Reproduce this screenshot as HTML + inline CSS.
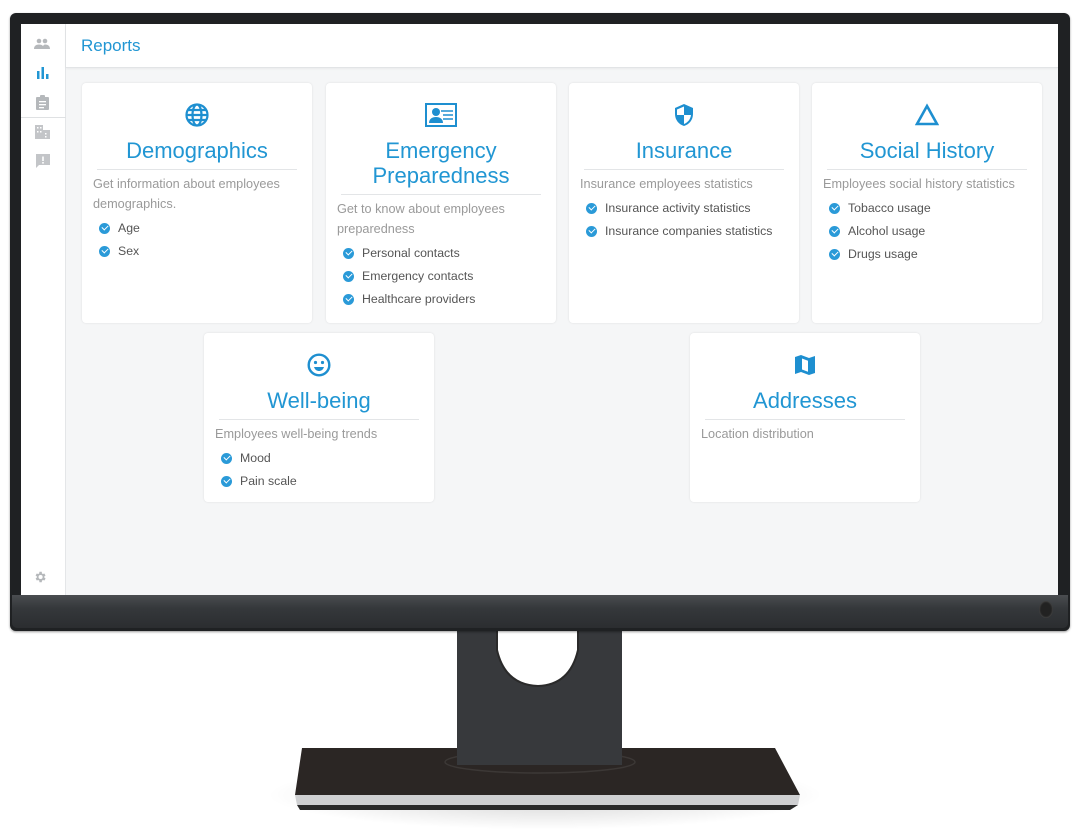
<!DOCTYPE html>
<html><head><meta charset="utf-8"><style>
*{margin:0;padding:0;box-sizing:border-box}
body{width:1082px;height:833px;background:#fff;position:relative;overflow:hidden;font-family:"Liberation Sans",sans-serif}
.abs{position:absolute}
.frame{left:10px;top:13px;width:1060px;height:618px;background:#1f2123;border-radius:6px;box-shadow:0 1px 2px rgba(0,0,0,.4)}
.bezel{left:12px;top:595px;width:1056px;height:33px;background:linear-gradient(#4a4d50,#35383b 40%,#2b2d30);border-radius:0 0 5px 5px}
.screen{left:21px;top:24px;width:1037px;height:571px;background:#f5f6f7;overflow:hidden}
.side{left:0;top:0;width:45px;height:571px;background:#fff;border-right:1px solid #e4e6e8}
.head{left:45px;top:0;width:992px;height:44px;background:#fff;border-bottom:1px solid #e2e4e6;box-shadow:0 1px 2px rgba(0,0,0,.05)}
.head span{position:absolute;left:15px;top:12px;font-size:17px;color:#2196d3}
.card{position:absolute;width:230px;background:#fff;border-radius:4px;box-shadow:0 0 2px rgba(0,0,0,.1);padding:20px 11px 0 11px;text-align:center}
.card svg.ic{display:block;margin:0 auto 11px;width:24px;height:24px}
.t{font-size:22px;line-height:25px;color:#2196d3;margin:0 4px;padding-bottom:6px;border-bottom:1px solid #e3e5e7}
.d{font-size:12.7px;line-height:20px;color:#9a9a9a;text-align:left;margin-top:4px}
ul{list-style:none;text-align:left;margin-top:3px;padding-left:6px}
li{font-size:12.3px;line-height:23px;color:#555;position:relative;padding-left:19px}
li:before{content:"";position:absolute;left:0;top:6px;width:11px;height:11px;border-radius:50%;background:#2a9ad8}
li:after{content:"";position:absolute;left:3px;top:8px;width:5px;height:3px;border-left:1.6px solid #fff;border-bottom:1.6px solid #fff;transform:rotate(-45deg)}
</style></head><body>
<div class="abs" style="left:265px;top:760px;width:560px;height:70px;border-radius:50%;background:radial-gradient(ellipse at center,rgba(0,0,0,.18),rgba(0,0,0,0) 70%)"></div>
<svg class="abs" style="left:0;top:0" width="1082" height="833">
<polygon points="302,748 775,748 800,795 295,795" fill="#2b2624"/>
<polygon points="295,795 800,795 798,805 297,805" fill="#cfd0d2"/>
<polygon points="297,805 798,805 790,810 300,810" fill="#2a2a2a"/>
<ellipse cx="540" cy="762" rx="95" ry="11" fill="none" stroke="#3c3836" stroke-width="1.5"/>
<rect x="457" y="620" width="165" height="145" fill="#37393c"/>
<path d="M497 628 L578 628 L578 650 Q570 685 538 686 Q505 685 497 650 Z" fill="#fff" stroke="#2a2a2a" stroke-width="2"/>
</svg>
<div class="abs frame"></div>
<div class="abs bezel"></div>
<div class="abs" style="left:1039px;top:601px;width:14px;height:17px;border-radius:50%;background:#222;box-shadow:inset 0 0 2px #666"></div>
<div class="abs screen">
 <div class="abs side">
  <svg class="abs" style="left:13px;top:14px" width="16" height="12" viewBox="0 0 16 12" fill="#b5b8bb"><circle cx="5" cy="3" r="2.3"/><circle cx="11" cy="3" r="2.3"/><path d="M0 11c0-3 2-4.5 5-4.5s5 1.5 5 4.5z M8 11c.5-2.5 1.5-4.5 3-4.5 3 0 5 1.5 5 4.5z"/></svg>
  <svg class="abs" style="left:16px;top:43px" width="12" height="12" fill="#2196d3"><rect x="0" y="4" width="2.5" height="8"/><rect x="4.5" y="0" width="2.5" height="12"/><rect x="9" y="7" width="2.5" height="5"/></svg>
  <svg class="abs" style="left:15px;top:71px" width="13" height="15" fill="#b5b8bb"><rect x="0" y="2" width="13" height="13" rx="1"/><rect x="4" y="0" width="5" height="3.5" rx="1"/><rect x="3" y="6" width="7" height="1.3" fill="#fff"/><rect x="3" y="9" width="7" height="1.3" fill="#fff"/><rect x="3" y="12" width="5" height="1.3" fill="#fff"/></svg>
  <div class="abs" style="left:0;top:93px;width:45px;border-top:1px solid #dfe1e3"></div>
  <svg class="abs" style="left:14px;top:101px" width="15" height="14" fill="#c3c5c8"><rect x="0" y="0" width="8" height="14"/><rect x="8" y="5" width="7" height="9"/><rect x="2" y="2" width="1.5" height="1.5" fill="#fff"/><rect x="5" y="2" width="1.5" height="1.5" fill="#fff"/><rect x="2" y="6" width="1.5" height="1.5" fill="#fff"/><rect x="5" y="6" width="1.5" height="1.5" fill="#fff"/><rect x="10" y="8" width="1.5" height="1.5" fill="#fff"/><rect x="10" y="11" width="1.5" height="1.5" fill="#fff"/></svg>
  <svg class="abs" style="left:15px;top:130px" width="14" height="14" fill="#c3c5c8"><path d="M0 0h14v11H3l-3 3z"/><rect x="6.2" y="2.5" width="1.6" height="4.5" fill="#fff"/><rect x="6.2" y="8" width="1.6" height="1.6" fill="#fff"/></svg>
  <svg class="abs" style="left:12px;top:546px" width="14" height="14" viewBox="0 0 24 24" fill="#b5b8bb"><path d="M19.4 13a7.5 7.5 0 000-2l2.1-1.6-2-3.5-2.5 1a7 7 0 00-1.7-1L15 3h-4l-.4 2.9a7 7 0 00-1.7 1l-2.5-1-2 3.5L6.6 11a7.5 7.5 0 000 2l-2.1 1.6 2 3.5 2.5-1a7 7 0 001.7 1L11 21h4l.4-2.9a7 7 0 001.7-1l2.5 1 2-3.5zM13 15.5a3.5 3.5 0 110-7 3.5 3.5 0 010 7z"/></svg>
 </div>
 <div class="abs head"><span>Reports</span></div>
</div>

<div class="card" style="left:82px;top:83px;height:240px">
 <svg class="ic" viewBox="0 0 24 24" fill="none" stroke="#1e8fd0" stroke-width="2.2"><circle cx="12" cy="12" r="10.5"/><ellipse cx="12" cy="12" rx="4.5" ry="10.5"/><path d="M1.5 12h21M3 7h18M3 17h18"/></svg>
 <div class="t">Demographics</div>
 <div class="d">Get information about employees demographics.</div>
 <ul><li>Age</li><li>Sex</li></ul>
</div>
<div class="card" style="left:326px;top:83px;height:240px">
 <svg class="ic" viewBox="0 0 32 24" style="width:32px"><rect x="1" y="1" width="30" height="22" fill="none" stroke="#1e8fd0" stroke-width="2"/><circle cx="11" cy="9" r="4" fill="#1e8fd0"/><path d="M4 20c0-4 3-6 7-6s7 2 7 6z" fill="#1e8fd0"/><path d="M16 8h12M18 12h10M18 16h10" stroke="#1e8fd0" stroke-width="1.5"/></svg>
 <div class="t">Emergency Preparedness</div>
 <div class="d">Get to know about employees preparedness</div>
 <ul><li>Personal contacts</li><li>Emergency contacts</li><li>Healthcare providers</li></ul>
</div>
<div class="card" style="left:569px;top:83px;height:240px">
 <svg class="ic" viewBox="0 0 24 24"><path d="M12 1L3 5v6c0 6 4 10.5 9 12 5-1.5 9-6 9-12V5z" fill="#1e8fd0"/><path d="M12 12h7c-.5 4-3 7.5-7 9zM12 3.5v8.5H5V6.5z" fill="#fff"/></svg>
 <div class="t">Insurance</div>
 <div class="d">Insurance employees statistics</div>
 <ul><li>Insurance activity statistics</li><li>Insurance companies statistics</li></ul>
</div>
<div class="card" style="left:812px;top:83px;height:240px">
 <svg class="ic" viewBox="0 0 24 24"><path d="M12 3L22 21H2z" fill="none" stroke="#1e8fd0" stroke-width="2.6"/></svg>
 <div class="t">Social History</div>
 <div class="d">Employees social history statistics</div>
 <ul><li>Tobacco usage</li><li>Alcohol usage</li><li>Drugs usage</li></ul>
</div>
<div class="card" style="left:204px;top:333px;height:169px">
 <svg class="ic" viewBox="0 0 24 24"><circle cx="12" cy="12" r="10.3" fill="none" stroke="#1e8fd0" stroke-width="2.4"/><circle cx="8.5" cy="9.5" r="1.6" fill="#1e8fd0"/><circle cx="15.5" cy="9.5" r="1.6" fill="#1e8fd0"/><path d="M7 14h10c-1 3-3 4-5 4s-4-1-5-4z" fill="#1e8fd0"/></svg>
 <div class="t">Well-being</div>
 <div class="d">Employees well-being trends</div>
 <ul><li>Mood</li><li>Pain scale</li></ul>
</div>
<div class="card" style="left:690px;top:333px;height:169px">
 <svg class="ic" viewBox="0 0 24 24"><path d="M2 4l6-2 8 3 6-2v17l-6 2-8-3-6 2z" fill="#1e8fd0"/><path d="M9 5.5l6 2.3v11l-6-2.3z" fill="#fff"/></svg>
 <div class="t">Addresses</div>
 <div class="d">Location distribution</div>
</div>
</body></html>
